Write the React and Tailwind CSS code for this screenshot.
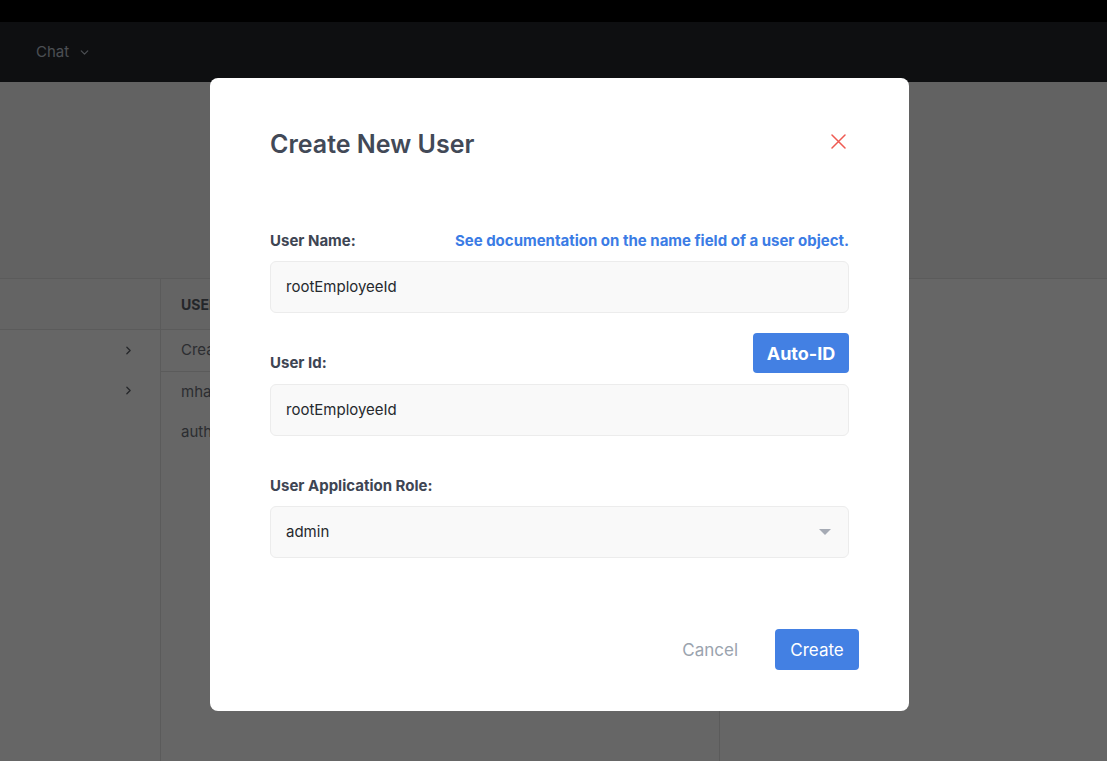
import React from "react";

function ChevronDown({ className }) {
  return (
    <svg className={className} viewBox="0 0 24 24" fill="none" stroke="currentColor" strokeWidth="2.2" strokeLinecap="round" strokeLinejoin="round">
      <path d="M6 9l6 6 6-6" />
    </svg>
  );
}

function ChevronRight({ className }) {
  return (
    <svg className={className} viewBox="0 0 24 24" fill="none" stroke="currentColor" strokeWidth="2.5" strokeLinecap="round" strokeLinejoin="round">
      <path d="M9 6l6 6-6 6" />
    </svg>
  );
}

export default function App() {
  return (
    <div className="relative h-[761px] w-full overflow-hidden bg-white" style={{ fontFamily: "Inter, 'Noto Sans', sans-serif" }}>
      {/* page behind modal */}
      <div className="h-[22px] bg-black" />
      <div className="flex h-[60px] items-center bg-[#23262b] pl-[36px] pt-[1px]">
        <span className="text-[15px] text-[#bcc3cf]">Chat</span>
        <ChevronDown className="ml-[9px] h-[13px] w-[13px] text-[#bcc3cf]" />
      </div>
      <div className="h-[197px] border-b border-[#e4e4e4] bg-[#f6f6f6]" />
      <div className="flex h-[482px]">
        <div className="w-[161px] border-r border-[#e4e4e4]">
          <div className="h-[51px] border-b border-[#e4e4e4] bg-[#f9f9f9]" />
          <div className="flex h-[40px] items-center justify-end pr-[25px]">
            <ChevronRight className="h-[13px] w-[13px] text-[#5f636a]" />
          </div>
          <div className="flex h-[40px] items-center justify-end pr-[25px]">
            <ChevronRight className="h-[13px] w-[13px] text-[#5f636a]" />
          </div>
        </div>
        <div className="w-[559px] border-r border-[#e4e4e4]">
          <div className="flex h-[51px] items-center border-b border-[#e4e4e4] bg-[#f9f9f9] pl-[20px] text-[14px] font-bold text-[#5b606a]">
            USERS
          </div>
          <div className="flex h-[42px] items-center border-b border-[#e4e4e4] pl-[20px] text-[15px] text-[#6e727b]">
            Create User
          </div>
          <div className="flex h-[40px] items-center pl-[20px] text-[15px] text-[#6e727b]">mhamilton</div>
          <div className="flex h-[40px] items-center pl-[20px] text-[15px] text-[#6e727b]">authuser</div>
        </div>
        <div className="flex-1" />
      </div>

      {/* overlay */}
      <div className="absolute inset-0 bg-black/60 pl-[210px] pt-[78px]">
        <div className="flex w-[699px] flex-col rounded-lg bg-white px-[60px] pb-[41px] pt-[50px]">
          <div className="flex h-[32px] shrink-0 items-center justify-between">
            <h2 className="text-[25px] font-semibold leading-[32px] text-[#424957]">Create New User</h2>
            <svg className="mr-[3px] -mt-[5px] h-[15px] w-[15px]" viewBox="0 0 15 15" fill="none" stroke="#ef5a52" strokeWidth="1.5" strokeLinecap="round">
              <path d="M1 1L14 14M14 1L1 14" />
            </svg>
          </div>

          <div className="mt-[71px] flex h-[20px] shrink-0 items-center justify-between text-[15px] font-bold leading-[20px]">
            <span className="text-[#3e4553]">User Name:</span>
            <span className="text-[#3b7ce5]">See documentation on the name field of a user object.</span>
          </div>
          <div className="mt-[10px] flex h-[52px] shrink-0 items-center rounded-md border border-[#ececec] bg-[#f9f9f9] pl-[15px] text-[15px] text-[#26292e]">
            rootEmployeeId
          </div>

          <div className="mt-[20px] flex shrink-0 items-end justify-between">
            <span className="text-[15px] font-bold leading-[20px] text-[#3e4553]">User Id:</span>
            <button className="flex h-[40px] w-[96px] items-center justify-center rounded-[4px] bg-[#4380e3] text-[18px] font-bold text-white">
              Auto-ID
            </button>
          </div>
          <div className="mt-[11px] flex h-[52px] shrink-0 items-center rounded-md border border-[#ececec] bg-[#f9f9f9] pl-[15px] text-[15px] text-[#26292e]">
            rootEmployeeId
          </div>

          <div className="mt-[40px] h-[20px] shrink-0 text-[15px] font-bold leading-[20px] text-[#3e4553]">User Application Role:</div>
          <div className="mt-[10px] flex h-[52px] shrink-0 items-center justify-between rounded-md border border-[#ececec] bg-[#f9f9f9] pl-[15px] pr-[17px] text-[15px] text-[#26292e]">
            <span>admin</span>
            <svg className="h-[6px] w-[12px]" viewBox="0 0 12 6">
              <path d="M0 0H12L6 6Z" fill="#a6abb5" />
            </svg>
          </div>

          <div className="-mr-[10px] mt-[71px] flex shrink-0 items-center justify-end">
            <span className="mr-[37px] pt-[2px] text-[17px] text-[#9aa3ae]">Cancel</span>
            <button className="flex h-[41px] w-[84px] items-center justify-center rounded-[4px] bg-[#4380e3] pt-[2px] text-[17px] text-white">
              Create
            </button>
          </div>
        </div>
      </div>
    </div>
  );
}
